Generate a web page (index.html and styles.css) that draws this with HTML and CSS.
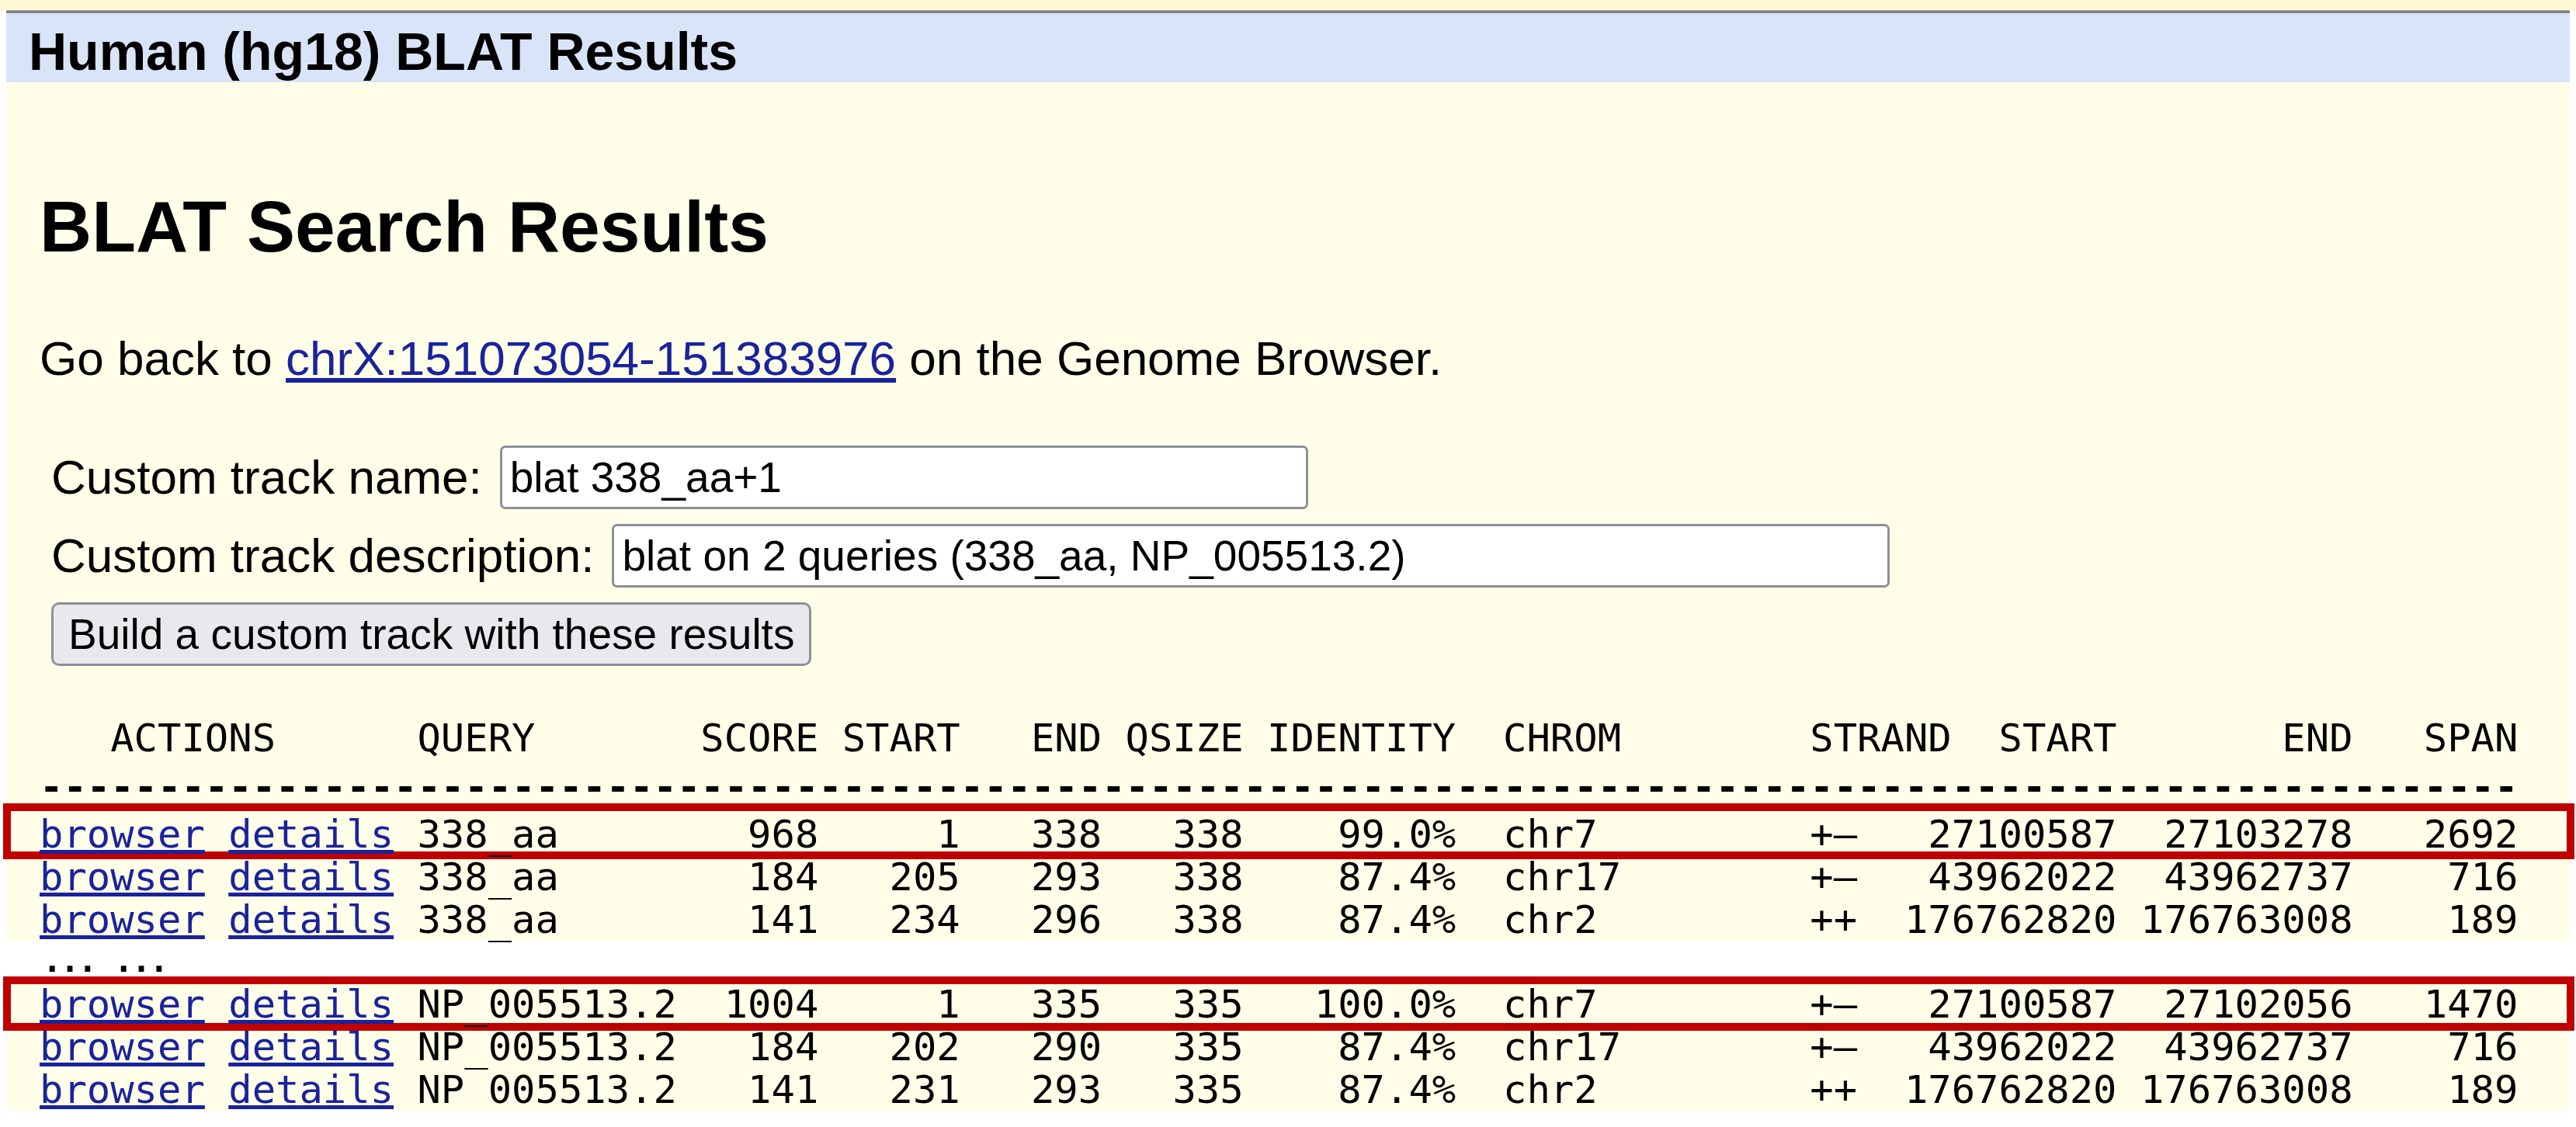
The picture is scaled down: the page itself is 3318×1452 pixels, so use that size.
FILE: index.html
```
<!DOCTYPE html>
<html>
<head>
<meta charset="utf-8">
<title>Human (hg18) BLAT Results</title>
<link rel="stylesheet" href="styles.css">
</head>
<body>
<div class="topstrip"></div>
<div class="page">
  <div class="rule"></div>
  <div class="band">Human (hg18) BLAT Results</div>
  <div class="main">
    <h1>BLAT Search Results</h1>
    <p class="goback">Go back to <a href="#">chrX:151073054-151383976</a> on the Genome Browser.</p>
    <form class="custom">
      <div class="field"><span>Custom track name:</span><input class="in-name" type="text" value="blat 338_aa+1"></div>
      <div class="field"><span>Custom track description:</span><input class="in-desc" type="text" value="blat on 2 queries (338_aa, NP_005513.2)"></div>
      <button type="button" class="build">Build a custom track with these results</button>
    </form>
    <div class="results">
      <div class="line head">   ACTIONS      QUERY       SCORE START   END QSIZE IDENTITY  CHROM        STRAND  START       END   SPAN</div>
      <div class="line head rule-line">---------------------------------------------------------------------------------------------------------</div>
      <div class="line hl hl-first"><a href="#">browser</a> <a href="#">details</a> 338_aa        968     1   338   338    99.0%  chr7         +–   27100587  27103278   2692</div>
      <div class="line"><a href="#">browser</a> <a href="#">details</a> 338_aa        184   205   293   338    87.4%  chr17        +–   43962022  43962737    716</div>
      <div class="line"><a href="#">browser</a> <a href="#">details</a> 338_aa        141   234   296   338    87.4%  chr2         ++  176762820 176763008    189</div>
    </div>
  </div>
  <div class="ellipsis">… …</div>
  <div class="main results rows2">
    <div class="line hl"><a href="#">browser</a> <a href="#">details</a> NP_005513.2  1004     1   335   335   100.0%  chr7         +–   27100587  27102056   1470</div>
    <div class="line"><a href="#">browser</a> <a href="#">details</a> NP_005513.2   184   202   290   335    87.4%  chr17        +–   43962022  43962737    716</div>
    <div class="line"><a href="#">browser</a> <a href="#">details</a> NP_005513.2   141   231   293   335    87.4%  chr2         ++  176762820 176763008    189</div>
  </div>
</div>
</body>
</html>
```

FILE: styles.css
```
html, body {
  margin: 0;
  padding: 0;
  background: #ffffff;
}
body {
  font-family: "Liberation Sans", Arial, sans-serif;
  color: #000;
}
.topstrip {
  height: 13px;
  background: #fff8d2;
}
.page {
  margin: 0 8px;
}
.rule {
  height: 4px;
  background: linear-gradient(#b4b4b4, #7a7a7a 45%, #8c8c8c);
}
.band {
  background: #d9e4f8;
  padding: 10px 0 0 29px;
  height: 79px;
  line-height: 79px;
  font-size: 68px;
  font-weight: bold;
}
.main {
  background: #fffee8;
  padding: 140px 0 0 43px;
}
h1 {
  margin: 0;
  font-size: 93px;
  line-height: 93px;
  font-weight: bold;
}
a {
  color: #1a239c;
}
.goback {
  margin: 88px 0 0;
  font-size: 62px;
  line-height: 70px;
}
.custom {
  margin: 77px 0 0 15px;
  display: flex;
  flex-direction: column;
  align-items: flex-start;
  gap: 19px;
}
.field {
  display: flex;
  align-items: center;
  gap: 23px;
  font-size: 62px;
  line-height: 70px;
  height: 82px;
}
.field input {
  box-sizing: border-box;
  height: 82px;
  margin: 0;
  border: 3px solid #8e8e9a;
  border-radius: 7px;
  padding: 0 10px;
  background: #fff;
  color: #000;
  font-family: "Liberation Sans", Arial, sans-serif;
  font-size: 55px;
}
.in-name {
  width: 1041px;
}
.in-desc {
  width: 1646px;
}
.build {
  box-sizing: border-box;
  height: 82px;
  margin: 0;
  padding: 0 19px;
  background: #e9e9ed;
  border: 3px solid #8f8f9d;
  border-radius: 10px;
  color: #000;
  font-family: "Liberation Sans", Arial, sans-serif;
  font-size: 55px;
}
.results {
  margin-top: 63px;
  font-family: "DejaVu Sans Mono", "Liberation Mono", monospace;
  font-size: 50.5px;
  line-height: 55px;
}
.rows2 {
  margin-top: 0;
  padding-top: 0;
}
.line {
  height: 55px;
  white-space: pre;
}
.line.head {
  height: 60px;
  line-height: 60px;
}
.line.rule-line {
  height: 66px;
  line-height: 66px;
  font-weight: bold;
}
.hl {
  position: relative;
  z-index: 0;
}
.hl::after {
  content: "";
  position: absolute;
  z-index: -1;
  top: -8px;
  bottom: -7px;
  left: -47px;
  right: -6px;
  border: 10px solid #c00000;
  pointer-events: none;
}
.hl-first::after {
  top: -12px;
  bottom: -5px;
}
.ellipsis {
  height: 54px;
  line-height: 31px;
  padding-left: 46px;
  font-size: 72px;
  background: #fff;
}
```
